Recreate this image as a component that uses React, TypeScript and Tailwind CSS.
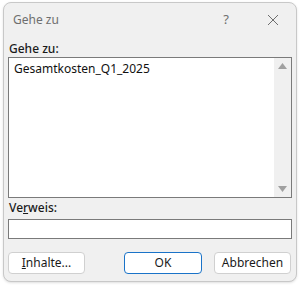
import React from 'react';

const font = { fontFamily: '"Noto Sans", "Open Sans", sans-serif' };

export default function App() {
  return (
    <div className="w-[300px] h-[285px] bg-white pl-[3px] pt-[2px] overflow-hidden" style={font}>
      <div className="w-[294px] h-[280px] bg-[#f0f0f0] border border-[#c8c8c8] rounded-[8px] flex flex-col shadow-sm">
        {/* Title bar */}
        <div className="h-[33px] flex items-center pl-[9px] text-[12px] text-[#6e6e6e]">
          <span className="flex-1">Gehe zu</span>
          <span className="w-[20px] text-center text-[13px] mr-[31px]">?</span>
          <svg width="12" height="12" viewBox="0 0 12 12" className="mr-[17px]">
            <path d="M1 1 L11 11 M11 1 L1 11" stroke="#6e6e6e" strokeWidth="1" fill="none" />
          </svg>
        </div>

        <div className="px-[4px] flex flex-col">
          <div className="text-[12px] text-[#1a1a1a] font-medium leading-[14px] pl-[1px] mt-[6px]">Gehe zu:</div>
          <div className="mt-[1px] h-[141px] bg-white border border-[#7a7a7a] flex">
            <div className="flex-1 pl-[5px] pt-[3px] text-[12px] text-[#111] leading-[16px]">Gesamtkosten_Q1_2025</div>
            <div className="w-[17px] bg-[#f0f0f0] flex flex-col items-center justify-between py-[5px]">
              <svg width="9" height="6" viewBox="0 0 9 6"><path d="M0 6 L4.5 0 L9 6 Z" fill="#a0a0a0" /></svg>
              <svg width="9" height="6" viewBox="0 0 9 6"><path d="M0 0 L4.5 6 L9 0 Z" fill="#a0a0a0" /></svg>
            </div>
          </div>

          <div className="text-[12px] text-[#1a1a1a] font-medium leading-[14px] pl-[1px] mt-[3px]">
            Ve<span className="underline">r</span>weis:
          </div>
          <div className="mt-[4px] h-[20px] bg-white border border-[#7a7a7a]" />

          <div className="mt-[13px] flex items-center text-[12px] text-[#1a1a1a]">
            <div className="w-[77px] h-[22px] bg-white border border-[#d0d0d0] rounded-[4px] flex items-center justify-center">
              <span><span className="underline">I</span>nhalte...</span>
            </div>
            <div className="ml-[39px] w-[78px] h-[22px] bg-white border-[1.5px] border-[#1a73c8] rounded-[4px] flex items-center justify-center">
              OK
            </div>
            <div className="ml-[12px] w-[77px] h-[22px] bg-white border border-[#d0d0d0] rounded-[4px] flex items-center justify-center">
              Abbrechen
            </div>
          </div>
        </div>
      </div>
    </div>
  );
}
